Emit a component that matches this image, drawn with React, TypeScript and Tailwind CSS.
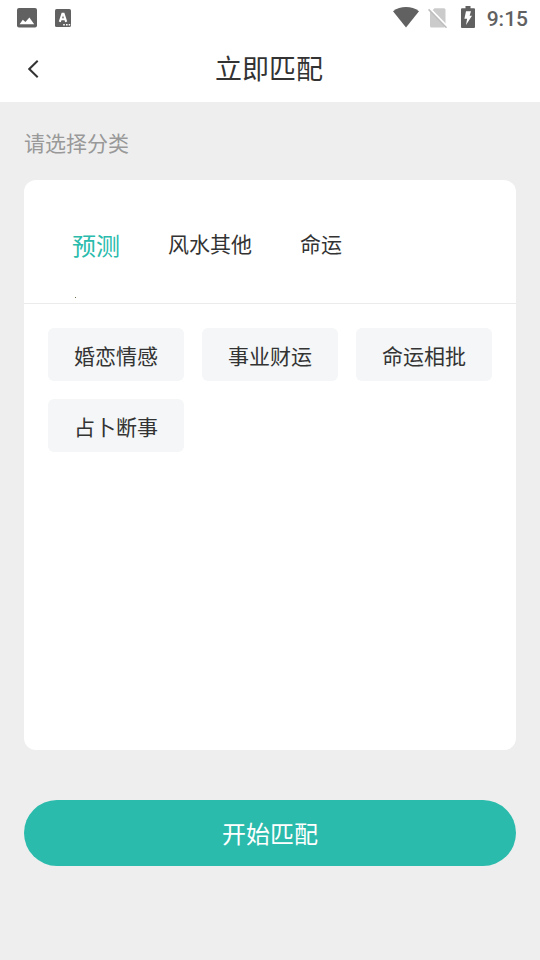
import { useState } from "react";
import { clsx } from "clsx";

const tabs = [
  { name: "预测", items: ["婚恋情感", "事业财运", "命运相批", "占卜断事"] },
  { name: "风水其他", items: [] },
  { name: "命运", items: [] },
];

function StatusBar() {
  return (
    <div className="flex h-9 items-start bg-white pl-[17px] pr-3 text-[#616161]">
      <svg className="mt-2 h-5 w-5" viewBox="0 0 20 20" fill="currentColor" aria-hidden="true">
        <rect width="20" height="19.5" rx="2" />
        <path d="M2.6 16.3 5.8 11.8l2.6 2.2 4-4.5 4.8 6.8z" fill="#fff" />
      </svg>
      <svg className="ml-[18px] mt-[9px] h-[18px] w-4" viewBox="0 0 16 18" aria-hidden="true">
        <rect width="16" height="18" rx="1.6" fill="currentColor" />
        <path
          d="M4.8 12.8 7.4 4.9h1.2l2.6 7.9M5.5 10.2h5"
          fill="none"
          stroke="#fff"
          strokeWidth="2.1"
        />
        <path d="M8.2 15h1.6v1.6H8.2zM11 15h1.6v1.6H11zM13.7 15h1.5v1.6h-1.5z" fill="#fff" />
      </svg>
      <div className="ml-auto flex items-start">
        <svg className="mt-[7px] h-[21px] w-[26px]" viewBox="0 0 26 21" fill="currentColor" aria-hidden="true">
          <path d="M0 4.2C3.8 1.4 8.2 0 13 0s9.200 1.4 13 4.2L13 20.6z" />
        </svg>
        <svg className="ml-[9px] mt-[7px] h-[22px] w-5" viewBox="0 0 20 22" aria-hidden="true">
          <path d="M6.5 1.2H16A1.5 1.5 0 0 1 17.5 2.7v14.6L4 3.7z" fill="#cbcbcb" />
          <path d="M2 4.5 17 19.8a1.5 1.5 0 0 1-1.2.7H3.5A1.5 1.5 0 0 1 2 19z" fill="#cbcbcb" />
          <path d="M1.6 1.2 19.3 19.3" stroke="#fff" strokeWidth="1.7" />
          <path d="M.5 2.4 18.5 20.7" stroke="#bdbdbd" strokeWidth="1.6" />
        </svg>
        <svg className="ml-[13px] mt-[6px] h-[22px] w-[14px]" viewBox="0 0 14 22" fill="currentColor" aria-hidden="true">
          <path d="M4.5 0h5v2.2H13a1 1 0 0 1 1 1V21a1 1 0 0 1-1 1H1a1 1 0 0 1-1-1V3.200a1 1 0 0 1 1-1h3.500z" />
          <path d="M5 5.2h5L8.6 9.8H11L5 19l1.1-6.3H3.400z" fill="#fff" />
        </svg>
        <span className="ml-3 mt-[7px] font-[Roboto,sans-serif] text-[21px] font-medium leading-6">
          9:15
        </span>
      </div>
    </div>
  );
}

export default function App() {
  const [active, setActive] = useState(0);

  return (
    <div className="flex h-[960px] w-[540px] flex-col bg-[#eeeeee] font-['Noto_Sans_CJK_SC',sans-serif] text-[#333333]">
      <StatusBar />
      <header className="grid h-[66px] grid-cols-[1fr_auto_1fr] items-center bg-white pr-[2px]">
        <button type="button" aria-label="返回" className="pl-7">
          <svg className="h-[18px] w-3" viewBox="0 0 12 18" fill="none" stroke="#333" strokeWidth="2" aria-hidden="true">
            <path d="M9.7.8 1.3 9l8.4 8.2" />
          </svg>
        </button>
        <h1 className="pb-[2px] text-[27px] leading-10">立即匹配</h1>
      </header>

      <main className="flex flex-col px-6">
        <p className="mt-6 text-[21px] leading-8 text-[#999999]">请选择分类</p>

        <section className="mt-[22px] h-[570px] rounded-xl bg-white">
          <div className="flex h-[124px] flex-col border-b border-[#ebebeb]">
            <nav className="flex h-[117px] items-center gap-12 px-12 pt-[9px]">
              {tabs.map((tab, i) => (
                <button
                  key={tab.name}
                  type="button"
                  onClick={() => setActive(i)}
                  className={clsx(
                    "leading-8",
                    i === active ? "pt-1 text-2xl text-[#2abbac]" : "text-[21px]"
                  )}
                >
                  {tab.name}
                </button>
              ))}
            </nav>
            <span className="ml-[51px] h-px w-px bg-[#6b6b4a]" />
          </div>

          <div className="grid grid-cols-3 gap-[18px] p-6">
            {tabs[active].items.map((item) => (
              <button
                key={item}
                type="button"
                className="h-[53px] rounded-md bg-[#f4f6f7] pt-px text-[21px] leading-[34px]"
              >
                {item}
              </button>
            ))}
          </div>
        </section>

        <button
          type="button"
          className="mt-[50px] h-[66px] rounded-full bg-[#2abbac] text-2xl text-white"
        >
          开始匹配
        </button>
      </main>
    </div>
  );
}
